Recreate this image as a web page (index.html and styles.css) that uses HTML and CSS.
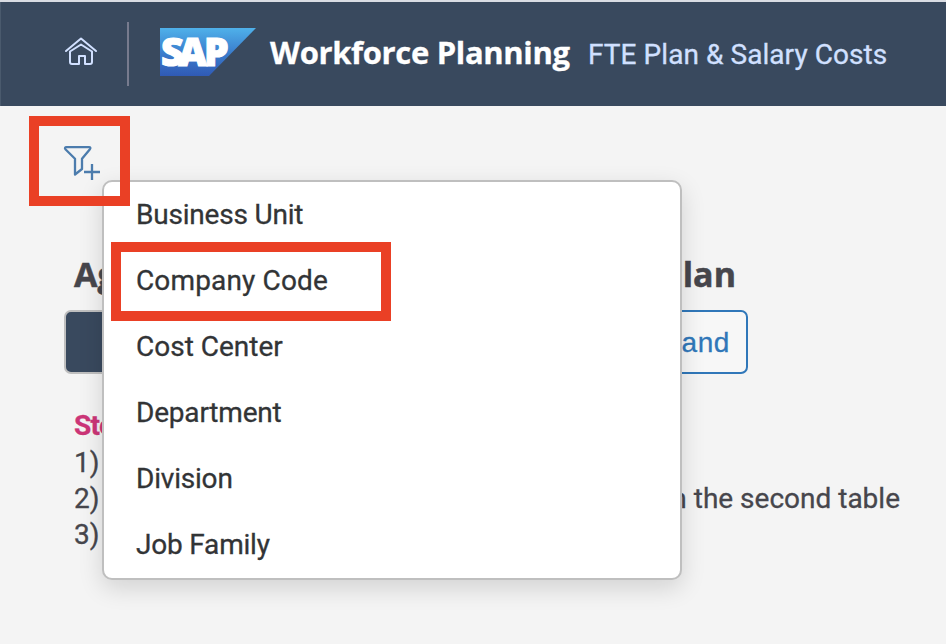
FILE: index.html
```html
<!DOCTYPE html>
<html lang="en">
<head>
<meta charset="utf-8">
<title>Workforce Planning</title>
<link rel="stylesheet" href="styles.css">
</head>
<body>
<header class="shell">
  <svg class="home" viewBox="0 0 34 30" fill="none" stroke="currentColor" stroke-width="2" stroke-linecap="round" stroke-linejoin="round">
    <path d="M2 15 17 2.5 32 15"/>
    <path d="M6 15.5 17 8.5l11 7V26q0 2-2 2h-5v-8h-6v8H8q-2 0-2-2z"/>
  </svg>
  <span class="divider"></span>
  <svg class="logo" viewBox="0 0 96 48">
    <defs><linearGradient id="sap" x1="0" y1="0" x2="0" y2="1"><stop offset="0" stop-color="#4fb1ea"/><stop offset=".5" stop-color="#3b7fce"/><stop offset="1" stop-color="#305ab5"/></linearGradient></defs>
    <path d="M0 0H96L49 48H0z" fill="url(#sap)"/>
    <text class="logo-text" x="1 18.5 44" y="38">SAP</text>
  </svg>
  <h1 class="title">Workforce Planning</h1>
  <span class="subtitle">FTE Plan &amp; Salary Costs</span>
</header>
<main class="page">
  <div class="toolbar">
    <svg class="filter" viewBox="0 0 38 36" fill="none" stroke="currentColor" stroke-width="2.3" stroke-linejoin="round">
      <path d="M3.5 3.2H26q2.2 0 .9 2L19 14.8V25l-7 5.5V14.8L2.4 5.2Q1.2 3.2 3.5 3.2z"/>
      <path d="M21 28h16M29 20v16"/>
    </svg>
  </div>
  <div class="headings"><h2>Ag</h2><h2>Plan</h2></div>
  <div class="tabs"><button class="tab active"></button><button class="tab">Demand</button></div>
  <section class="steps">
    <h3>Steps</h3>
    <p>1)</p>
    <p class="step"><span>2)</span><span class="ending">in the second table</span></p>
    <p>3)</p>
  </section>
</main>
<ul class="menu">
  <li class="tight">Business Unit</li>
  <li class="loose">Company Code</li>
  <li>Cost Center</li>
  <li class="tight">Department</li>
  <li class="tight">Division</li>
  <li class="tight">Job Family</li>
</ul>
<div class="mark mark-filter"></div>
<div class="mark mark-code"></div>
</body>
</html>
```
FILE: styles.css
```css
* { box-sizing: border-box; }
body { margin: 0; width: 946px; height: 644px; overflow: hidden; background: #f4f4f4; font: 28px/36px Roboto, "Noto Sans", sans-serif; color: #46464c; -webkit-text-stroke: .3px; }
h1, h2, h3, p, ul { margin: 0; padding: 0; }
.shell { height: 106px; display: flex; align-items: center; border-top: 2px solid #d9dce3; background: #39495e; padding-left: 64px; box-shadow: inset 1px 0 #4a5a6d; }
.home { width: 34px; height: 30px; color: #d1e0ff; margin-top: -6px; }
.divider { width: 2px; height: 64px; background: #777b8e; margin-left: 29px; }
.logo { width: 96px; height: 48px; margin: -4px 0 0 31px; overflow: visible; }
.logo-text { font: 800 39px "Open Sans", sans-serif; fill: #fff; stroke: #fff; stroke-width: 1.2px; }
.title { margin: -4px 0 0 14px; width: 318px; font: bold 31px/40px "Open Sans", sans-serif; letter-spacing: -.34px; color: #fff; white-space: nowrap; }
.subtitle { color: #d1e0ff; white-space: nowrap; letter-spacing: .06px; margin-top: 2px; }
.toolbar { height: 148px; padding: 38px 0 0 63px; }
.filter { display: block; width: 38px; height: 36px; color: #4c7cad; }
.headings { width: 662px; margin-left: 74px; height: 56px; display: flex; justify-content: space-between; font-family: "Open Sans", sans-serif; }
h2 { font-size: 34px; line-height: 40px; font-weight: 700; -webkit-text-stroke: .5px; }
.tabs { width: 684px; margin-left: 64px; height: 64px; display: flex; gap: 16px; }
.tab { flex: 1; border: 2px solid #3077b9; border-radius: 7px; background: #f7f7f7; color: #3077b9; font: 28px "Liberation Sans", sans-serif; letter-spacing: .6px; text-align: right; padding: 2px 16px 0; }
.tab.active { border-color: #bfbfbf; background: #39495e; }
.steps { margin: 34px 0 0 74px; }
h3 { font: bold 28px/36px Roboto, sans-serif; letter-spacing: -.8px; height: 37px; color: #cc3577; }
.step { width: 826px; display: flex; justify-content: space-between; }
.menu { position: absolute; left: 102px; top: 180px; width: 580px; height: 400px; list-style: none; background: #fff; border: 2px solid #bfbfbf; border-radius: 10px; box-shadow: 0 8px 24px rgba(0,0,0,.14); }
.menu li { height: 66px; line-height: 66px; padding-left: 32px; color: #323436; }
.menu .tight { letter-spacing: -.2px; }
.menu .loose { letter-spacing: .15px; }
.mark { position: absolute; border: 10px solid #ea4025; }
.mark-filter { left: 29px; top: 116px; width: 101px; height: 90px; }
.mark-code { left: 111px; top: 242px; width: 280px; height: 79px; }
```
